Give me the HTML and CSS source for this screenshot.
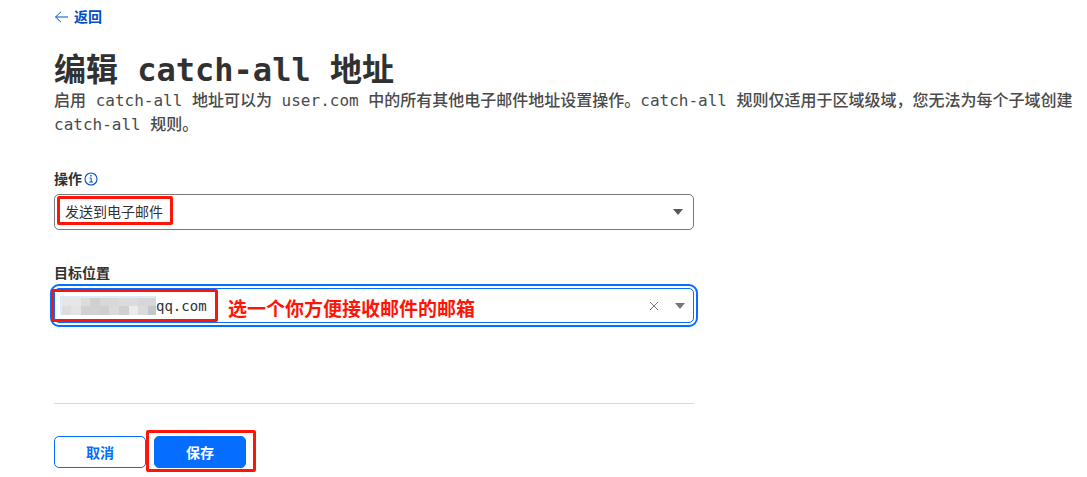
FILE: index.html
```
<!DOCTYPE html>
<html lang="zh-CN">
<head>
  <meta charset="UTF-8">
  <meta name="viewport" content="width=device-width, initial-scale=1.0">
  <title>编辑 catch-all 地址</title>
  <link rel="stylesheet" href="styles.css">
</head>
<body>
  <main class="page">
    <a href="#" class="back-link">
      <svg width="14" height="12" viewBox="0 0 14 12" fill="none" stroke="currentColor" stroke-width="1">
        <path d="M7 0.8 L1.5 6 L7 11.2 M1.5 6 H14" />
      </svg>
      返回
    </a>

    <h1>编辑 catch-all 地址</h1>
    <p class="description">启用 catch-all 地址可以为 user.com 中的所有其他电子邮件地址设置操作。catch-all 规则仅适用于区域级域，您无法为每个子域创建 catch-all 规则。</p>

    <form class="rule-form">
      <div class="field">
        <div class="field-label">
          <label for="action">操作</label>
          <svg class="info" width="14" height="14" viewBox="0 0 14 14" fill="none" stroke="currentColor">
            <circle cx="7" cy="7" r="6" stroke-width="1.1" />
            <path d="M5.5 6 H7.2 V10 M5.2 10 H9" />
            <path d="M6.3 3.8 H7.7" stroke-width="1.4" />
          </svg>
        </div>
        <div class="control">
          <select id="action" name="action">
            <option>发送到电子邮件</option>
          </select>
          <svg class="caret" width="10" height="6" viewBox="0 0 10 6"><path d="M0 0 H10 L5 6 Z" fill="currentColor" /></svg>
          <span class="mark mark-action"></span>
        </div>
      </div>

      <div class="field">
        <div class="field-label">
          <label for="destination">目标位置</label>
        </div>
        <div class="control combo">
          <svg class="mosaic" width="96" height="19" viewBox="0 0 96 19" shape-rendering="crispEdges">
            <rect width="96" height="19" fill="#dfeafa" />
            <rect x="2" y="2" width="19" height="8" fill="#e6e6e8" />
            <rect x="21" y="2" width="9" height="8" fill="#dcdcdb" />
            <rect x="30" y="2" width="10" height="8" fill="#d0d0d1" />
            <rect x="40" y="2" width="19" height="8" fill="#d8d8da" />
            <rect x="59" y="2" width="19" height="8" fill="#dcdcde" />
            <rect x="78" y="2" width="18" height="8" fill="#d6d7db" />
            <rect x="2" y="10" width="9" height="9" fill="#dddddf" />
            <rect x="11" y="10" width="10" height="9" fill="#e4e4e4" />
            <rect x="21" y="10" width="19" height="9" fill="#d1d1d2" />
            <rect x="40" y="10" width="9" height="9" fill="#cfcfd1" />
            <rect x="49" y="10" width="10" height="9" fill="#dadadb" />
            <rect x="59" y="10" width="10" height="9" fill="#d0d0d3" />
            <rect x="69" y="10" width="9" height="9" fill="#eaeceb" />
            <rect x="78" y="10" width="10" height="9" fill="#dadadc" />
            <rect x="88" y="10" width="8" height="9" fill="#c5c6ca" />
          </svg>
          <input type="text" id="destination" name="destination" value="qq.com">
          <button type="button" class="clear" aria-label="清除">
            <svg width="10" height="10" viewBox="0 0 10 10" stroke="currentColor"><path d="M1 1 L9 9 M9 1 L1 9" /></svg>
          </button>
          <svg class="caret" width="10" height="6" viewBox="0 0 10 6"><path d="M0 0 H10 L5 6 Z" fill="currentColor" /></svg>
          <span class="mark mark-destination"></span>
          <span class="note">选一个你方便接收邮件的邮箱</span>
        </div>
      </div>

      <div class="actions">
        <button type="button" class="btn">取消</button>
        <div class="save">
          <button type="submit" class="btn btn-primary">保存</button>
          <span class="mark mark-save"></span>
        </div>
      </div>
    </form>
  </main>
</body>
</html>
```
FILE: styles.css
```
* {
  box-sizing: border-box;
}
body {
  margin: 0;
  background: #fff;
  color: #36393a;
  font-family: "DejaVu Sans Mono", "Noto Sans CJK SC", monospace;
  font-size: 14px;
  line-height: 20px;
}
.page {
  padding: 7px 8px 8px 54px;
}
.back-link {
  display: flex;
  align-items: center;
  gap: 6px;
  width: fit-content;
  color: #0051c3;
  font-weight: bold;
  text-decoration: none;
}
h1 {
  margin: 24px 0 0;
  font-size: 32px;
  line-height: 38px;
  font-weight: bold;
  color: #313131;
}
.description {
  margin: 0;
  font-size: 16px;
  line-height: 24px;
  font-weight: 500;
  color: #4a4a4a;
}
.rule-form {
  max-width: 640px;
  margin-top: 32px;
}
.field {
  margin-bottom: 33px;
}
.field-label {
  display: flex;
  align-items: center;
  gap: 2px;
  margin-bottom: 5px;
  font-weight: bold;
  color: #313131;
}
.info {
  color: #0051c3;
}
.control {
  position: relative;
  display: flex;
  align-items: center;
  height: 36px;
  border: 1px solid #797979;
  border-radius: 5px;
}
.control select {
  flex: 1;
  height: 100%;
  padding: 0 10px 2px;
  border: none;
  background: none;
  appearance: none;
  font-family: "Noto Sans CJK SC", sans-serif;
  font-size: 14px;
  color: #313131;
}
.caret {
  position: absolute;
  right: 10px;
  color: #595959;
  pointer-events: none;
}
.combo {
  height: 35px;
  padding-left: 5px;
  border-color: #056dff;
  outline: 2px solid #056dff;
  outline-offset: 2px;
}
.combo input {
  flex: 1;
  min-width: 0;
  height: 32px;
  padding: 0;
  border: none;
  outline: none;
  background: none;
  font-family: inherit;
  font-size: 14px;
  color: #313131;
}
.clear {
  display: flex;
  margin-right: 34px;
  padding: 0;
  border: none;
  background: none;
  color: #797979;
  cursor: pointer;
}
.combo .caret {
  right: 8px;
  color: #72777b;
}
.actions {
  display: flex;
  gap: 8px;
  margin-top: 80px;
  padding-top: 32px;
  border-top: 1px solid #d9d9d9;
}
.btn {
  width: 92px;
  height: 32px;
  border: 1px solid #056dff;
  border-radius: 5px;
  background: #fff;
  color: #056dff;
  font-family: inherit;
  font-size: 14px;
  font-weight: bold;
  cursor: pointer;
}
.btn-primary {
  background: #056dff;
  color: #fff;
}
.save {
  position: relative;
}

/* red highlights over the form */
.mark {
  position: absolute;
  border: 3px solid #ff1408;
  border-radius: 2px;
  pointer-events: none;
}
.mark-action {
  top: 1px;
  left: 2px;
  width: 116px;
  height: 29px;
}
.mark-destination {
  top: 0;
  left: -4px;
  width: 167px;
  height: 33px;
}
.mark-save {
  top: -6px;
  left: -8px;
  width: 110px;
  height: 42px;
}
.note {
  position: absolute;
  left: 173px;
  top: 8px;
  font-size: 19px;
  line-height: 24px;
  font-weight: bold;
  color: #ff1408;
  white-space: nowrap;
  pointer-events: none;
}
```
